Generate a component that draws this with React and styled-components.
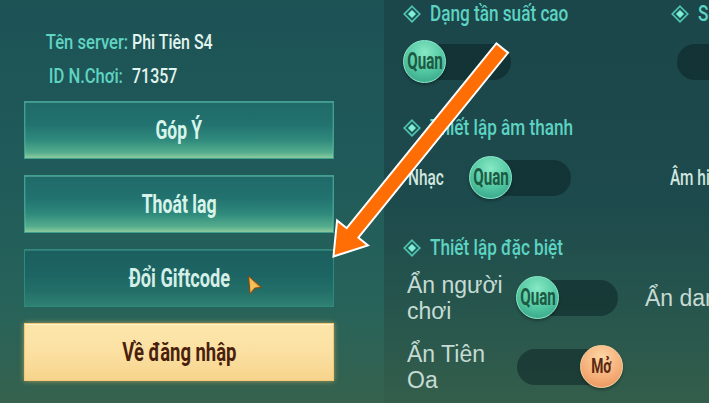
import React from 'react';
import styled, { createGlobalStyle } from 'styled-components';

const Global = createGlobalStyle`
  html, body { margin: 0; padding: 0; background: #1c4a4d; }
  * { box-sizing: border-box; }
`;

const Screen = styled.div`
  position: relative;
  width: 709px;
  height: 403px;
  overflow: hidden;
  display: flex;
  background: linear-gradient(180deg, #1b464a 0%, #1d4a4c 50%, #27564d 78%, #345e4b 100%);
  font-family: Roboto, "Noto Sans", sans-serif;
`;

const LeftPanel = styled.div`
  width: 384px;
  flex: none;
  display: flex;
  flex-direction: column;
  padding: 28px 0 0 24px;
  background: linear-gradient(180deg, #1d5255 0%, #205b5a 45%, #27635a 75%, #36624e 100%);
`;

const InfoGrid = styled.div`
  display: grid;
  grid-template-columns: 99px 1fr;
  grid-auto-rows: 28px;
  column-gap: 9px;
  row-gap: 6px;
  align-items: center;
`;

const Cond = styled.span`
  display: inline-block;
  white-space: nowrap;
  transform: scaleX(${p => p.$sx ?? 0.78});
  transform-origin: ${p => p.$origin ?? 'center'};
`;

const InfoLabel = styled.div`
  text-align: right;
  color: #5fd4c3;
  font-size: 21px;
  font-weight: 500;
  line-height: 28px;
`;

const InfoValue = styled.div`
  color: #e2f4ee;
  font-size: 21px;
  font-weight: 500;
  line-height: 28px;
`;

const ButtonStack = styled.div`
  display: flex;
  flex-direction: column;
  gap: 16px;
  margin-top: 11px;
`;

const tones = {
  teal: {
    bg: 'linear-gradient(180deg, #1f6a68 0%, #227270 40%, #2f8a7c 68%, #55ad8d 90%, #8ccb9f 100%)',
    border: '#3fa08d',
    color: '#d8f4ea',
    shadow: 'inset 0 1px 0 rgba(140,230,210,0.35), inset 1px 0 0 rgba(140,230,210,0.15), inset -1px 0 0 rgba(140,230,210,0.15)',
  },
  dim: {
    bg: 'linear-gradient(180deg, #1b5e5e 0%, #1d6564 45%, #237068 75%, #2f8173 100%)',
    border: '#2f8a7d',
    color: '#d4efe6',
    shadow: 'inset 0 1px 0 rgba(120,210,190,0.25)',
  },
  gold: {
    bg: 'linear-gradient(180deg, #fde6ab 0%, #fbe0a2 50%, #f7d48c 100%)',
    border: '#f5c878',
    color: '#4a1f0e',
    shadow: '0 0 5px rgba(255,205,110,0.55), inset 0 1px 0 rgba(255,250,220,0.7)',
  },
};

const MenuButton = styled.div`
  position: relative;
  width: 310px;
  height: 58px;
  display: flex;
  align-items: center;
  justify-content: center;
  background: ${p => tones[p.$tone].bg};
  border: 1px solid ${p => tones[p.$tone].border};
  box-shadow: ${p => tones[p.$tone].shadow};
  color: ${p => tones[p.$tone].color};
  font-size: 26px;
  font-weight: 700;
  line-height: 1;
`;

const Cursor = styled.svg`
  position: absolute;
  left: 222px;
  top: 25px;
`;

const RightPanel = styled.div`
  flex: 1;
  display: flex;
  flex-direction: column;
  padding: 2px 0 0 19px;
  min-width: 0;
`;

const HeaderRow = styled.div`
  display: flex;
  height: 24px;
  margin-top: ${p => p.$mt}px;
`;

const Header = styled.div`
  width: ${p => p.$w}px;
  flex: none;
  display: flex;
  align-items: center;
  gap: 9px;
  color: #5dd3c2;
  font-size: 22px;
  font-weight: 500;
  line-height: 24px;
  white-space: nowrap;
`;

const SettingRow = styled.div`
  display: flex;
  align-items: center;
  height: 43px;
  margin-top: ${p => p.$mt}px;
`;

const Setting = styled.div`
  width: ${p => p.$w}px;
  flex: none;
  display: flex;
  align-items: center;
  padding-left: ${p => p.$pl || 0}px;
  height: 43px;
`;

const CondLabel = styled.div`
  width: ${p => p.$w}px;
  flex: none;
  color: #d0e6df;
  font-size: 22px;
  font-weight: 500;
  white-space: nowrap;
`;

const PlainLabel = styled.div`
  width: ${p => p.$w}px;
  flex: none;
  color: #c6dbd4;
  font-family: "Liberation Sans", Arial, sans-serif;
  font-size: 23px;
  line-height: 26px;
  white-space: nowrap;
`;

const Track = styled.div`
  width: ${p => p.$w}px;
  height: 36px;
  flex: none;
  border-radius: 18px;
  background: rgba(10, 32, 34, 0.5);
  display: flex;
  align-items: center;
  justify-content: ${p => (p.$on ? 'flex-end' : 'flex-start')};
`;

const Knob = styled.div`
  width: 43px;
  height: 43px;
  flex: none;
  margin-right: ${p => (p.$on ? '-2px' : '0')};
  border-radius: 50%;
  display: flex;
  align-items: center;
  justify-content: center;
  background: ${p =>
    p.$on
      ? 'radial-gradient(circle at 50% 28%, #fdd7a6 0%, #f6b07a 55%, #e58c55 100%)'
      : 'radial-gradient(circle at 50% 28%, #86e9c4 0%, #55c9a4 50%, #2f9c80 100%)'};
  border: 1px solid ${p => (p.$on ? '#fbd2a0' : '#8eeccb')};
  box-shadow: 0 2px 3px rgba(0, 0, 0, 0.3);
  color: ${p => (p.$on ? '#5a2811' : '#1c5a44')};
  font-size: ${p => (p.$on ? 21 : 23)}px;
  font-weight: 700;
  line-height: 1;
`;

const ArrowLayer = styled.svg`
  position: absolute;
  left: 0;
  top: 0;
  pointer-events: none;
`;

function Diamond() {
  return (
    <svg width="18" height="18" viewBox="0 0 18 18">
      <polygon points="9,1.2 16.8,9 9,16.8 1.2,9" fill="rgba(60,170,150,0.15)" stroke="#4fc8b5" strokeWidth="1.6" />
      <polygon points="9,5 13,9 9,13 5,9" fill="#7ef0d8" />
    </svg>
  );
}

function Toggle({ w, on, label }) {
  return (
    <Track $w={w} $on={on}>
      {label && (
        <Knob $on={on}>
          <Cond $sx={0.66}>{label}</Cond>
        </Knob>
      )}
    </Track>
  );
}

export default function App() {
  return (
    <>
      <Global />
      <Screen>
        <LeftPanel>
          <InfoGrid>
            <InfoLabel><Cond $sx={0.79} $origin="right">Tên server:</Cond></InfoLabel>
            <InfoValue><Cond $sx={0.76} $origin="left">Phi Tiên S4</Cond></InfoValue>
            <InfoLabel><Cond $sx={0.79} $origin="right">ID N.Chơi:</Cond></InfoLabel>
            <InfoValue><Cond $sx={0.76} $origin="left">71357</Cond></InfoValue>
          </InfoGrid>
          <ButtonStack>
            <MenuButton $tone="teal"><Cond $sx={0.67}>Góp Ý</Cond></MenuButton>
            <MenuButton $tone="teal"><Cond $sx={0.68}>Thoát lag</Cond></MenuButton>
            <MenuButton $tone="dim">
              <Cond $sx={0.7}>Đổi Giftcode</Cond>
              <Cursor width="16" height="20" viewBox="0 0 16 20">
                <polygon points="1.5,1 14.5,12.5 8,13 3,19" fill="#eda43c" stroke="#7a4a12" strokeWidth="1" strokeLinejoin="round" />
                <polygon points="3,4 11,12 7,12.3 3.8,16" fill="#f7c25e" />
              </Cursor>
            </MenuButton>
            <MenuButton $tone="gold"><Cond $sx={0.71}>Về đăng nhập</Cond></MenuButton>
          </ButtonStack>
        </LeftPanel>

        <RightPanel>
          <HeaderRow $mt={0}>
            <Header $w={268}><Diamond /><Cond $sx={0.78} $origin="left">Dạng tần suất cao</Cond></Header>
            <Header $w={120}><Diamond /><Cond $sx={0.78} $origin="left">Số lượng</Cond></Header>
          </HeaderRow>
          <SettingRow $mt={14}>
            <Setting $w={274}>
              <Toggle w={108} label="Quan" />
            </Setting>
            <Setting $w={120}>
              <Toggle w={110} on />
            </Setting>
          </SettingRow>

          <HeaderRow $mt={33}>
            <Header $w={268}><Diamond /><Cond $sx={0.78} $origin="left">Thiết lập âm thanh</Cond></Header>
          </HeaderRow>
          <SettingRow $mt={16}>
            <Setting $w={267} $pl={5}>
              <CondLabel $w={61}><Cond $sx={0.7} $origin="left">Nhạc</Cond></CondLabel>
              <Toggle w={102} label="Quan" />
            </Setting>
            <Setting $w={120}>
              <CondLabel $w={120}><Cond $sx={0.7} $origin="left">Âm hiệu</Cond></CondLabel>
            </Setting>
          </SettingRow>

          <HeaderRow $mt={37}>
            <Header $w={268}><Diamond /><Cond $sx={0.78} $origin="left">Thiết lập đặc biệt</Cond></Header>
          </HeaderRow>
          <SettingRow $mt={16}>
            <Setting $w={242} $pl={4}>
              <PlainLabel $w={109}>Ẩn người<br />chơi</PlainLabel>
              <Toggle w={102} label="Quan" />
            </Setting>
            <Setting $w={120}>
              <PlainLabel $w={120}>Ẩn danh</PlainLabel>
            </Setting>
          </SettingRow>
          <SettingRow $mt={26}>
            <Setting $w={242} $pl={4}>
              <PlainLabel $w={110}>Ẩn Tiên<br />Oa</PlainLabel>
              <Toggle w={104} on label="Mở" />
            </Setting>
          </SettingRow>
        </RightPanel>

        <ArrowLayer width="709" height="403" viewBox="0 0 709 403">
          <polygon
            points="334.6,255.1 365.9,245 356.95,237.8 506.65,52.9 496.55,44.7 346.85,229.6 337.9,222.4"
            fill="#ff6d05"
            stroke="#ffffff"
            strokeWidth="4"
            strokeLinejoin="miter"
            strokeMiterlimit="3"
            paintOrder="stroke"
          />
        </ArrowLayer>
      </Screen>
    </>
  );
}
